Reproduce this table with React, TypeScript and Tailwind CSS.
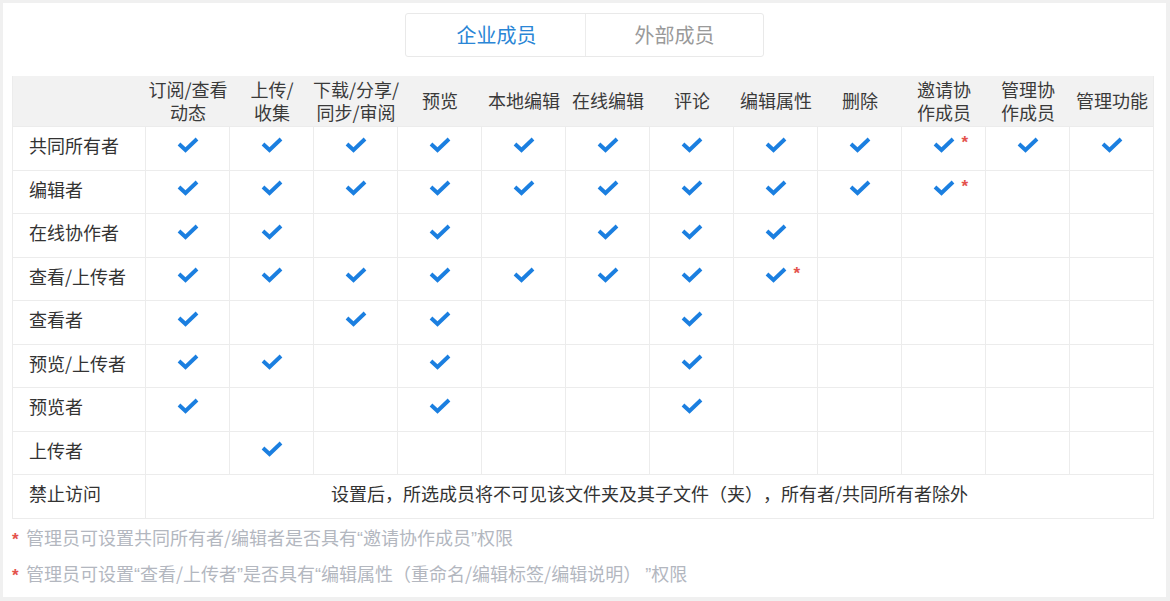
import React from "react";

const FONT = '"Microsoft YaHei", "Noto Sans CJK SC", "Noto Sans", sans-serif';
const LATIN = '"Liberation Sans", "Noto Sans CJK SC", sans-serif';

const headers: React.ReactNode[] = [
  <>订阅/查看<br />动态</>,
  <>上传/<br />收集</>,
  <>下载/分享/<br />同步/审阅</>,
  <>预览</>,
  <>本地编辑</>,
  <>在线编辑</>,
  <>评论</>,
  <>编辑属性</>,
  <>删除</>,
  <>邀请协<br />作成员</>,
  <>管理协<br />作成员</>,
  <>管理功能</>,
];

type Row = { name: string; checks: number[]; star?: number };

const rows: Row[] = [
  { name: "共同所有者", checks: [1, 2, 3, 4, 5, 6, 7, 8, 9, 10, 11, 12], star: 10 },
  { name: "编辑者", checks: [1, 2, 3, 4, 5, 6, 7, 8, 9, 10], star: 10 },
  { name: "在线协作者", checks: [1, 2, 4, 6, 7, 8] },
  { name: "查看/上传者", checks: [1, 2, 3, 4, 5, 6, 7, 8], star: 8 },
  { name: "查看者", checks: [1, 3, 4, 7] },
  { name: "预览/上传者", checks: [1, 2, 4, 7] },
  { name: "预览者", checks: [1, 4, 7] },
  { name: "上传者", checks: [2] },
];

const heights = ["h-[44px]", "h-[43px]", "h-[44px]", "h-[43px]", "h-[44px]", "h-[43px]", "h-[44px]", "h-[43px]", "h-[44px]"];

function Check() {
  return (
    <svg width="22" height="16" viewBox="0 0 22 16" className="block">
      <path d="M2 7 L8.5 13 L20 2" fill="none" stroke="#1b7fe0" strokeWidth="3.9" strokeLinejoin="miter" />
    </svg>
  );
}

function Star() {
  return (
    <span className="absolute left-[calc(50%+18px)] top-[7px] text-[17px] font-bold leading-none text-[#e4524c]" style={{ fontFamily: LATIN }}>
      *
    </span>
  );
}

function Q({ c }: { c: string }) {
  return <span style={{ fontFamily: LATIN }}>{c}</span>;
}

export default function App() {
  return (
    <div className="w-[1170px] h-[601px] bg-[#f0f0f0] pt-[3px] pl-[3px] pr-[4px] pb-[4px]" style={{ fontFamily: FONT }}>
      <div className="w-full h-full bg-white pt-[10px]">
        <div className="mx-auto w-[359px] h-[44px] flex border border-[#e9e9e9] rounded-[3px] text-[20px]">
          <div className="flex-1 flex items-center justify-center text-[#2a86d6] border-r border-[#ececec] pl-[2px]">企业成员</div>
          <div className="flex-1 flex items-center justify-center text-[#9a9a9a]">外部成员</div>
        </div>

        <div className="ml-[9px] mt-[19px] w-[1142px] border-l border-r border-b border-[#ececec] text-[18px] text-[#333]">
          <div className="grid grid-cols-[133px_repeat(12,84px)] h-[50px] bg-[#f2f2f2]">
            <div />
            {headers.map((h, i) => (
              <div key={i} className="flex items-center justify-center text-center leading-[23px] text-[#3a3a3a] whitespace-nowrap pb-[1px]">
                <span>{h}</span>
              </div>
            ))}
          </div>
          {rows.map((r, ri) => (
            <div key={ri} className={`grid grid-cols-[133px_repeat(12,84px)] ${heights[ri]} border-t border-[#ececec]`}>
              <div className="flex items-center pl-[16px] border-r border-[#ececec] pb-[6px]">{r.name}</div>
              {Array.from({ length: 12 }, (_, ci) => ci + 1).map((c) => (
                <div key={c} className={`relative flex items-center justify-center pb-[8px] ${c < 12 ? "border-r border-[#ececec]" : ""}`}>
                  {r.checks.includes(c) && <Check />}
                  {r.star === c && <Star />}
                </div>
              ))}
            </div>
          ))}
          <div className={`grid grid-cols-[133px_1fr] ${heights[8]} border-t border-[#ececec]`}>
            <div className="flex items-center pl-[16px] border-r border-[#ececec] pb-[6px]">禁止访问</div>
            <div className="flex items-center justify-center pb-[6px] [text-spacing-trim:space-all]">设置后，所选成员将不可见该文件夹及其子文件（夹），所有者/共同所有者除外</div>
          </div>
        </div>

        <div className="mt-[1px] pl-[9px] text-[18px] text-[#b3b7bf] [text-spacing-trim:space-all]">
          <div className="h-[36px] flex items-center">
            <span className="text-[#e4524c] text-[17px] font-bold w-[14px] pt-[4px]" style={{ fontFamily: LATIN }}>*</span>
            <span>
              管理员可设置共同所有者/编辑者是否具有<Q c="“" />邀请协作成员<Q c="”" />权限
            </span>
          </div>
          <div className="h-[36px] flex items-center">
            <span className="text-[#e4524c] text-[17px] font-bold w-[14px] pt-[4px]" style={{ fontFamily: LATIN }}>*</span>
            <span>
              管理员可设置<Q c="“" />查看/上传者<Q c="”" />是否具有<Q c="“" />编辑属性（重命名/编辑标签/编辑说明）<span className="pl-[4px]"><Q c="”" /></span>权限
            </span>
          </div>
        </div>
      </div>
    </div>
  );
}
